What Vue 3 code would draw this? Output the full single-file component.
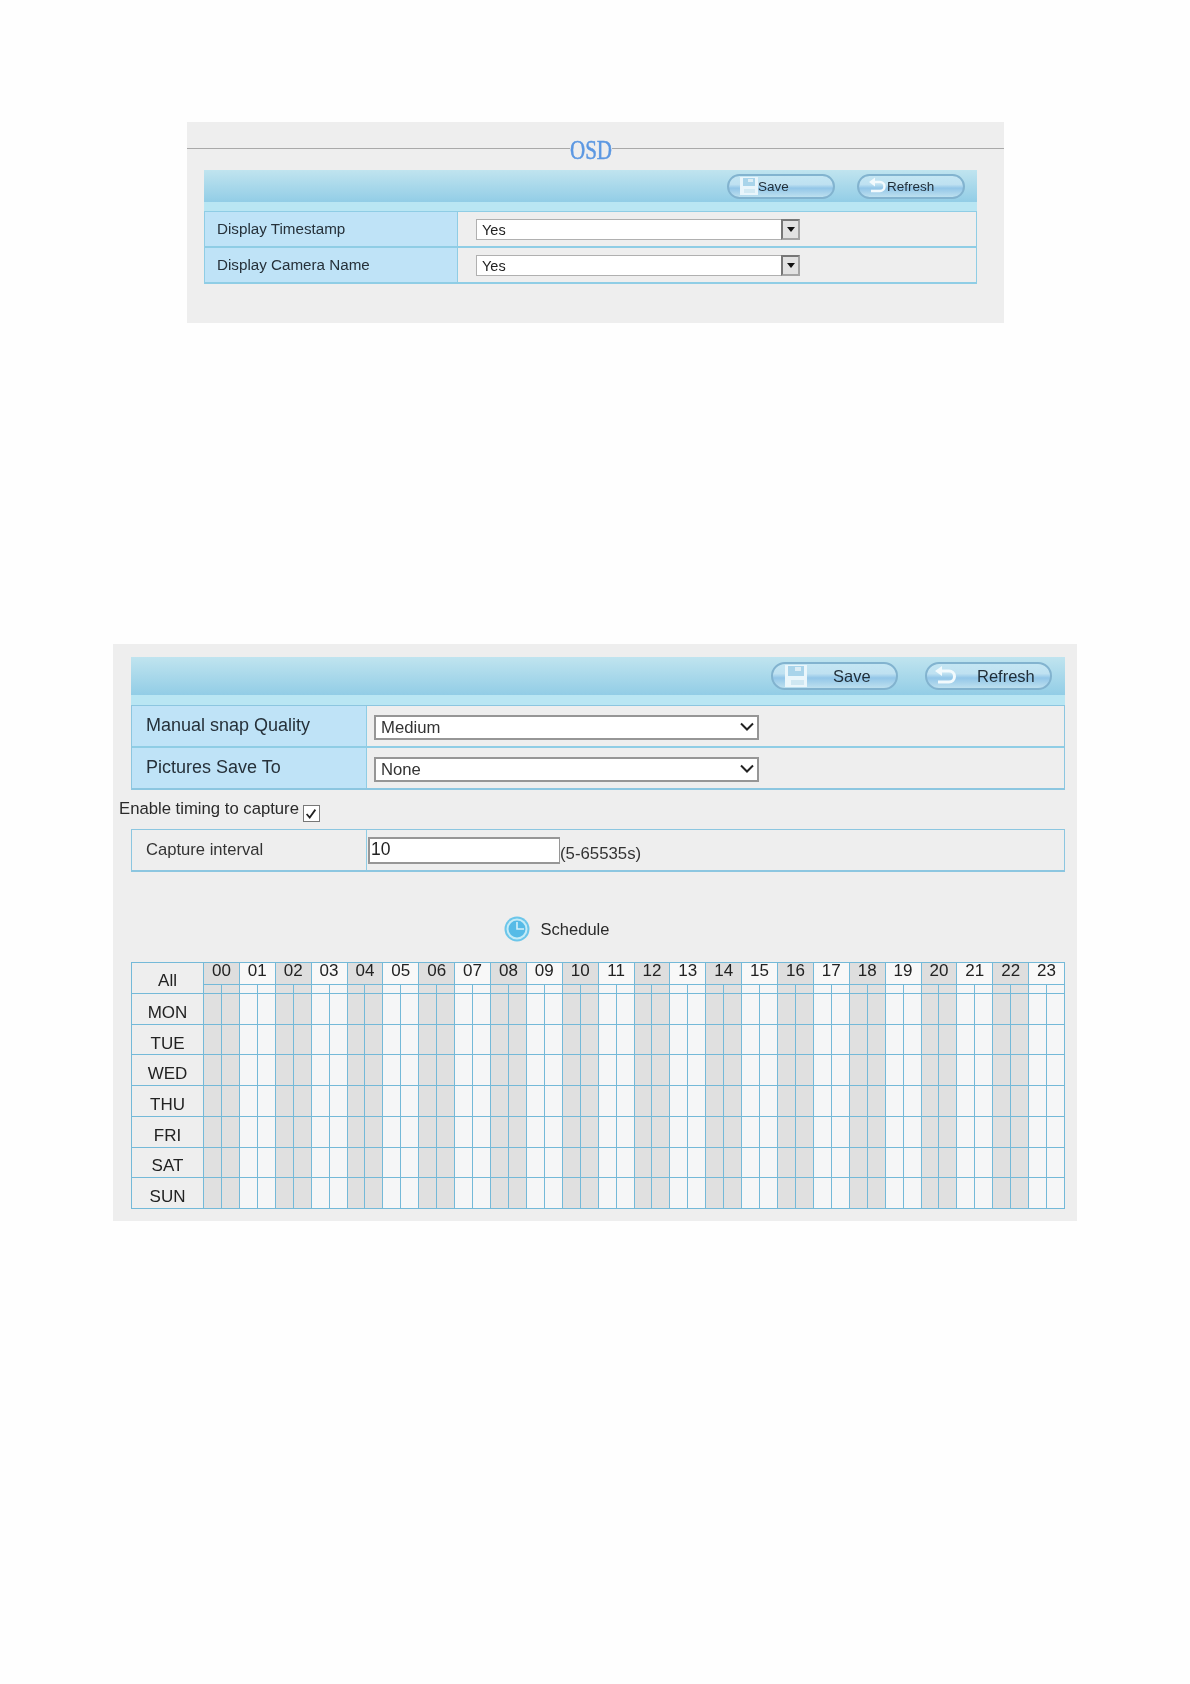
<script setup>
const hours = Array.from({ length: 24 }, (_, i) => String(i).padStart(2, '0'))
const halves = Array.from({ length: 48 }, (_, i) => i)
const days = ['MON', 'TUE', 'WED', 'THU', 'FRI', 'SAT', 'SUN']
</script>

<template>
  <div class="page">
    <section class="panel osd">
      <div class="title-row">
        <span class="rule rule-left"></span>
        <span class="title"><span class="title-text">OSD</span></span>
        <span class="rule"></span>
      </div>

      <div class="toolbar">
        <button class="pill small save-small">
          <svg class="ico" viewBox="0 0 18 18" width="18" height="18">
            <path d="M0 0H18V18H0Z" fill="#e9f5fb" />
            <path d="M3 1H15V9H3Z" fill="#a9d4ea" />
            <path d="M8 2H13V5H8Z" fill="#dcedf5" />
            <path d="M4 12H15V16H4Z" fill="#d2e9f3" />
          </svg>
          <span>Save</span>
        </button>
        <button class="pill small refresh-small">
          <svg class="ico" viewBox="0 0 18 18" width="18" height="18">
            <path d="M6 5H12A4.500 4.500 0 0 1 12 14H3" fill="none" stroke="#f2fafd" stroke-width="2.500" />
            <path d="M7 0.500V9.500L1 5Z" fill="#f2fafd" />
          </svg>
          <span>Refresh</span>
        </button>
      </div>
      <div class="strip"></div>

      <div class="tbl">
        <div class="row osd-row">
          <div class="lab">Display Timestamp</div>
          <div class="val">
            <div class="xp-wrap">
              <select class="xp"><option>Yes</option></select>
              <span class="xp-btn"><i></i></span>
            </div>
          </div>
        </div>
        <div class="row osd-row">
          <div class="lab">Display Camera Name</div>
          <div class="val">
            <div class="xp-wrap">
              <select class="xp"><option>Yes</option></select>
              <span class="xp-btn"><i></i></span>
            </div>
          </div>
        </div>
      </div>
    </section>

    <section class="panel snap">
      <div class="toolbar big">
        <button class="pill large save-large">
          <svg class="ico" viewBox="0 0 22 22" width="22" height="22">
            <path d="M0 0H22V22H0Z" fill="#eaf6fb" />
            <path d="M3 1H19V11H3Z" fill="#a9d4ea" />
            <path d="M10 2H16V6H10Z" fill="#dcedf5" />
            <path d="M6 15H19V20H6Z" fill="#cfe7f2" />
          </svg>
          <span>Save</span>
        </button>
        <button class="pill large refresh-large">
          <svg class="ico" viewBox="0 0 24 22" width="24" height="22">
            <path d="M8 6H15A5.500 5.500 0 0 1 15 17H4" fill="none" stroke="#f2fafd" stroke-width="3" />
            <path d="M8 1V11L1 6Z" fill="#f2fafd" />
          </svg>
          <span>Refresh</span>
        </button>
      </div>
      <div class="strip tall"></div>

      <div class="tbl">
        <div class="row snap-row">
          <div class="lab">Manual snap Quality</div>
          <div class="val">
            <div class="mod-wrap">
              <select class="mod"><option>Medium</option></select>
              <svg class="chev" viewBox="0 0 14 9" width="14" height="9"><path d="M1 1.500L7 7.500L13 1.500" fill="none" stroke="#222" stroke-width="2" /></svg>
            </div>
          </div>
        </div>
        <div class="row snap-row">
          <div class="lab">Pictures Save To</div>
          <div class="val">
            <div class="mod-wrap">
              <select class="mod"><option>None</option></select>
              <svg class="chev" viewBox="0 0 14 9" width="14" height="9"><path d="M1 1.500L7 7.500L13 1.500" fill="none" stroke="#222" stroke-width="2" /></svg>
            </div>
          </div>
        </div>
      </div>

      <div class="enable">
        <span>Enable timing to capture</span>
        <span class="check">
          <svg viewBox="0 0 16 16" width="14" height="14"><path d="M3 8L6.500 12L13 3" fill="none" stroke="#222" stroke-width="2" /></svg>
        </span>
      </div>

      <div class="tbl">
        <div class="row interval-row">
          <div class="lab plain">Capture interval</div>
          <div class="val tight">
            <input class="num" value="10" />
            <span class="hint">(5-65535s)</span>
          </div>
        </div>
      </div>

      <div class="schedule">
        <svg class="clock" viewBox="0 0 26 26" width="26" height="26">
          <circle cx="13" cy="13" r="12.500" fill="#6cc6ea" />
          <circle cx="13" cy="13" r="10.500" fill="#c4ebf7" />
          <circle cx="13" cy="13" r="8.500" fill="#56bbe7" />
          <path d="M13 6V13H20" fill="none" stroke="#d4f0f9" stroke-width="1.600" />
        </svg>
        <span>Schedule</span>
      </div>

      <div class="grid">
        <div class="all">All</div>
        <div v-for="(h, i) in hours" :key="h" class="hour" :class="{ dark: i % 2 === 0 }">{{ h }}</div>
        <div
          v-for="n in halves"
          :key="'s' + n"
          class="half sub"
          :class="{ dark: Math.floor(n / 2) % 2 === 0 }"
        ></div>
        <template v-for="d in days" :key="d">
          <div class="day">{{ d }}</div>
          <div
            v-for="n in halves"
            :key="d + n"
            class="half"
            :class="{ dark: Math.floor(n / 2) % 2 === 0 }"
          ></div>
        </template>
      </div>
    </section>
  </div>
</template>

<style>
html, body { margin: 0; background: #fff; }
</style>

<style scoped>
.page {
  height: 1684px;
  overflow: hidden;
  padding-top: 122px;
  box-sizing: border-box;
  font-family: "Liberation Sans", Arial, sans-serif;
  color: #2a2f33;
  background: #fefefe;
  filter: blur(0.35px);
}
.panel { background: #eeeeee; box-sizing: border-box; }

.osd {
  width: 817px;
  height: 201px;
  margin-left: 187px;
  padding: 4px 27px 0 17px;
}
.title-row {
  display: flex;
  align-items: center;
  height: 44px;
  margin: 0 -27px 0 -17px;
}
.rule { flex: 1; height: 1px; background: #a9a9a9; }
.rule-left { flex: 0 0 383px; }
.title { width: 42px; display: flex; justify-content: center; }
.title-text {
  font-family: "Liberation Serif", serif;
  font-size: 27px;
  line-height: 27px;
  margin-top: 4px;
  color: #5c98e2;
  -webkit-text-stroke: 0.5px #5c98e2;
  display: inline-block;
  transform: scaleX(0.78);
}

.toolbar {
  height: 32px;
  display: flex;
  align-items: center;
  justify-content: flex-end;
  gap: 22px;
  padding-right: 12px;
  background: linear-gradient(#c0e4ef, #92cde6);
}
.toolbar.big { height: 38px; gap: 27px; padding-right: 13px; }
.strip { height: 9px; background: #b9e6f3; }
.strip.tall { height: 10px; }

.pill {
  display: flex;
  align-items: center;
  margin: 0;
  box-sizing: border-box;
  font-family: inherit;
  color: #1f2c36;
  border: 2px solid #82b3cf;
  border-radius: 14px;
  background: linear-gradient(#c4e6f3 0%, #bfe1f1 40%, #93c6e8 58%, #bde0ef 100%);
}
.pill.small { width: 108px; height: 25px; padding: 0 0 0 11px; font-size: 13.500px; }
.refresh-small { padding-left: 9px !important; }
.refresh-small span { margin-left: 1px; }
.pill.large { width: 127px; height: 28px; padding: 0; font-size: 16.500px; border-radius: 15px; }
.save-large { padding-left: 12px !important; }
.save-large span { margin-left: 26px; }
.refresh-large { padding-left: 7px !important; }
.refresh-large span { margin-left: 19px; }
.ico { flex: none; }

.tbl { border: 1px solid #8fcde5; border-bottom-width: 2px; }
.row { display: flex; }
.row + .row { border-top: 2px solid #8fcde5; }
.lab {
  display: flex;
  align-items: center;
  box-sizing: border-box;
  background: #bfe3f7;
  border-right: 1px solid #8fcde5;
  color: #26313a;
}
.lab.plain { background: transparent; }
.val { flex: 1; display: flex; align-items: center; }

.osd-row { height: 34px; }
.osd-row .lab { width: 253px; padding-left: 12px; padding-bottom: 1px; font-size: 15.200px; }
.osd-row .val { padding-left: 18px; }
.xp-wrap { position: relative; width: 324px; height: 21px; }
.xp {
  appearance: none;
  width: 100%;
  height: 100%;
  display: block;
  box-sizing: border-box;
  margin: 0;
  padding: 2px 0 0 5px;
  border: 1px solid #b0b0b0;
  border-radius: 0;
  background: #fff;
  font: 14.500px "Liberation Sans", sans-serif;
  color: #222;
}
.xp-btn {
  position: absolute;
  right: 0;
  top: 0;
  width: 19px;
  height: 21px;
  box-sizing: border-box;
  border: 2px solid #777;
  border-right-color: #a4a4a4;
  border-bottom-color: #a4a4a4;
  background: #e2e2e2;
  display: flex;
  align-items: center;
  justify-content: center;
}
.xp-btn i {
  width: 0;
  height: 0;
  border: 4px solid transparent;
  border-top: 5px solid #111;
  border-bottom: 0;
}

.snap {
  width: 964px;
  height: 577px;
  margin: 321px 0 0 113px;
  padding: 13px 12px 0 18px;
}
.snap-row { height: 40px; }
.snap .tbl { border-color: #8cc6e0; }
.snap-row .lab { width: 235px; padding-left: 14px; padding-bottom: 2px; font-size: 18px; }
.snap-row .val { padding-left: 7px; padding-top: 2px; }
.mod-wrap { position: relative; width: 385px; height: 25px; }
.mod {
  appearance: none;
  display: block;
  width: 100%;
  height: 100%;
  box-sizing: border-box;
  margin: 0;
  padding: 0 0 0 5px;
  border: 2px solid #969696;
  border-radius: 0;
  background: #fff;
  font: 16.700px "Liberation Sans", sans-serif;
  color: #333;
}
.chev { position: absolute; right: 5px; top: 7px; }

.enable {
  display: flex;
  align-items: flex-start;
  gap: 4px;
  height: 39px;
  margin-left: -12px;
  padding-top: 9px;
  box-sizing: border-box;
  font-size: 16.700px;
  line-height: 20px;
  color: #2a2a2a;
}
.check {
  width: 17px;
  height: 17px;
  margin-top: 6px;
  box-sizing: border-box;
  border: 1px solid #777;
  background: #fff;
  display: flex;
  align-items: center;
  justify-content: center;
}

.interval-row { height: 40px; }
.interval-row .lab { width: 235px; padding-left: 14px; padding-bottom: 0; font-size: 16.600px; color: #333; }
.val.tight { padding-left: 1px; align-items: flex-start; padding-top: 7px; }
.num {
  width: 192px;
  height: 27px;
  box-sizing: border-box;
  margin: 0;
  padding: 0 0 3px 1px;
  border: 2px solid #969696;
  border-right-width: 1px;
  background: #fff;
  font: 17.500px "Liberation Sans", sans-serif;
  color: #222;
  outline: 0;
}
.hint { font-size: 16.800px; line-height: 20px; margin-top: 7px; color: #333; }

.schedule {
  display: flex;
  align-items: center;
  justify-content: center;
  gap: 11px;
  height: 90px;
  padding-top: 24px;
  box-sizing: border-box;
  margin-right: 83px;
  font-size: 16.500px;
  color: #2a2a2a;
}
.clock { flex: none; }

.grid {
  display: grid;
  grid-template-columns: 72px repeat(48, 1fr);
  grid-template-rows: 21px 10px repeat(7, 1fr);
  height: 247px;
  box-sizing: border-box;
  border: 1px solid #74b9d8;
  border-width: 1px 0 0 1px;
  font-size: 17px;
  color: #222;
}
.all, .day {
  display: flex;
  align-items: center;
  justify-content: center;
  background: #eeeeee;
  border-right: 1px solid #74b9d8;
  border-bottom: 1px solid #74b9d8;
  padding-top: 8px;
  box-sizing: border-box;
  font-size: 17px;
  line-height: 20px;
}
.all { grid-row: span 2; padding-top: 5px; }
.hour {
  grid-column: span 2;
  display: flex;
  align-items: center;
  justify-content: center;
  background: #f8f8f8;
  border-right: 1px solid #74b9d8;
  padding-bottom: 6px;
  box-sizing: border-box;
  font-size: 17px;
  line-height: 1;
}
.hour.dark { background: #dedede; }
.half {
  background: #f5f6f7;
  border-right: 1px solid #74b9d8;
  border-bottom: 1px solid #74b9d8;
  box-sizing: border-box;
}
.half.dark { background: #e0e0e0; }
.half.sub { border-top: 1px solid #74b9d8; }
</style>
